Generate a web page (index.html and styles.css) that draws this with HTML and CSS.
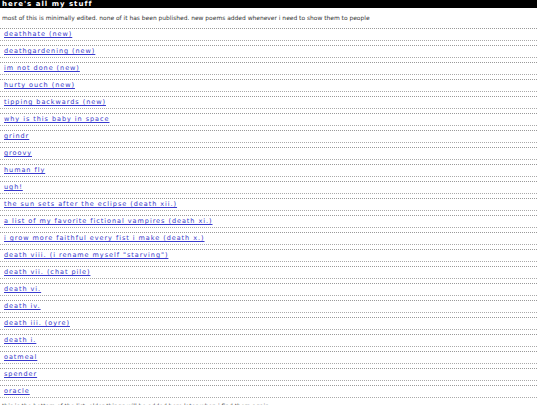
FILE: index.html
```html
<!DOCTYPE html>
<html>
<head>
<meta charset="utf-8">
<title>here's all my stuff</title>
<link rel="stylesheet" href="styles.css">
</head>
<body>
<div class="page">
  <div class="title">here's all my stuff</div>
  <p class="intro">most of this is minimally edited. none of it has been published. new poems added whenever i need to show them to people</p>
  <ul class="list">
    <li><a href="#">deathhate (new)</a></li>
    <li><a href="#">deathgardening (new)</a></li>
    <li><a href="#">im not done (new)</a></li>
    <li><a href="#">hurty ouch (new)</a></li>
    <li><a href="#">tipping backwards (new)</a></li>
    <li><a href="#">why is this baby in space</a></li>
    <li><a href="#">grindr</a></li>
    <li><a href="#">groovy</a></li>
    <li><a href="#">human fly</a></li>
    <li><a href="#">ugh!</a></li>
    <li><a href="#">the sun sets after the eclipse (death xii.)</a></li>
    <li><a href="#">a list of my favorite fictional vampires (death xi.)</a></li>
    <li><a href="#">i grow more faithful every fist i make (death x.)</a></li>
    <li><a href="#">death viii. (i rename myself "starving")</a></li>
    <li><a href="#">death vii. (chat pile)</a></li>
    <li><a href="#">death vi.</a></li>
    <li><a href="#">death iv.</a></li>
    <li><a href="#">death iii. (oyre)</a></li>
    <li><a href="#">death i.</a></li>
    <li><a href="#">oatmeal</a></li>
    <li><a href="#">spender</a></li>
    <li><a href="#">oracle</a></li>
  </ul>
  <p class="footer">this is the bottom of the list. older things will be added here later when i find them again</p>
</div>
</body>
</html>
```

FILE: styles.css
```css
html, body {
  margin: 0;
  padding: 0;
  background: #ffffff;
}
body {
  font-family: "DejaVu Sans", Verdana, sans-serif;
}
.page {
  width: 537px;
}
.title {
  background: #000000;
  color: #ffffff;
  font-weight: bold;
  font-size: 7px;
  letter-spacing: 1px;
  line-height: 8px;
  padding-left: 2px;
}
.intro {
  margin: 0;
  padding: 6px 0 0 2px;
  font-size: 5.95px;
  line-height: 8px;
  color: #333333;
}
.list {
  list-style: none;
  margin: 6px 0 0 0;
  padding: 0;
}
.list li {
  border-top: 1px dotted #999999;
  border-bottom: 1px dotted #aaaaaa;
  height: 11px;
  margin-bottom: 4px;
  padding-left: 4px;
  display: flex;
  align-items: center;
}
.list a {
  color: #3838cc;
  font-size: 6.5px;
  letter-spacing: 0.95px;
  line-height: 11px;
  text-decoration: underline;
}
.footer {
  margin: 0;
  padding-left: 2px;
  font-size: 6px;
  line-height: 8px;
  color: #444444;
}
```
